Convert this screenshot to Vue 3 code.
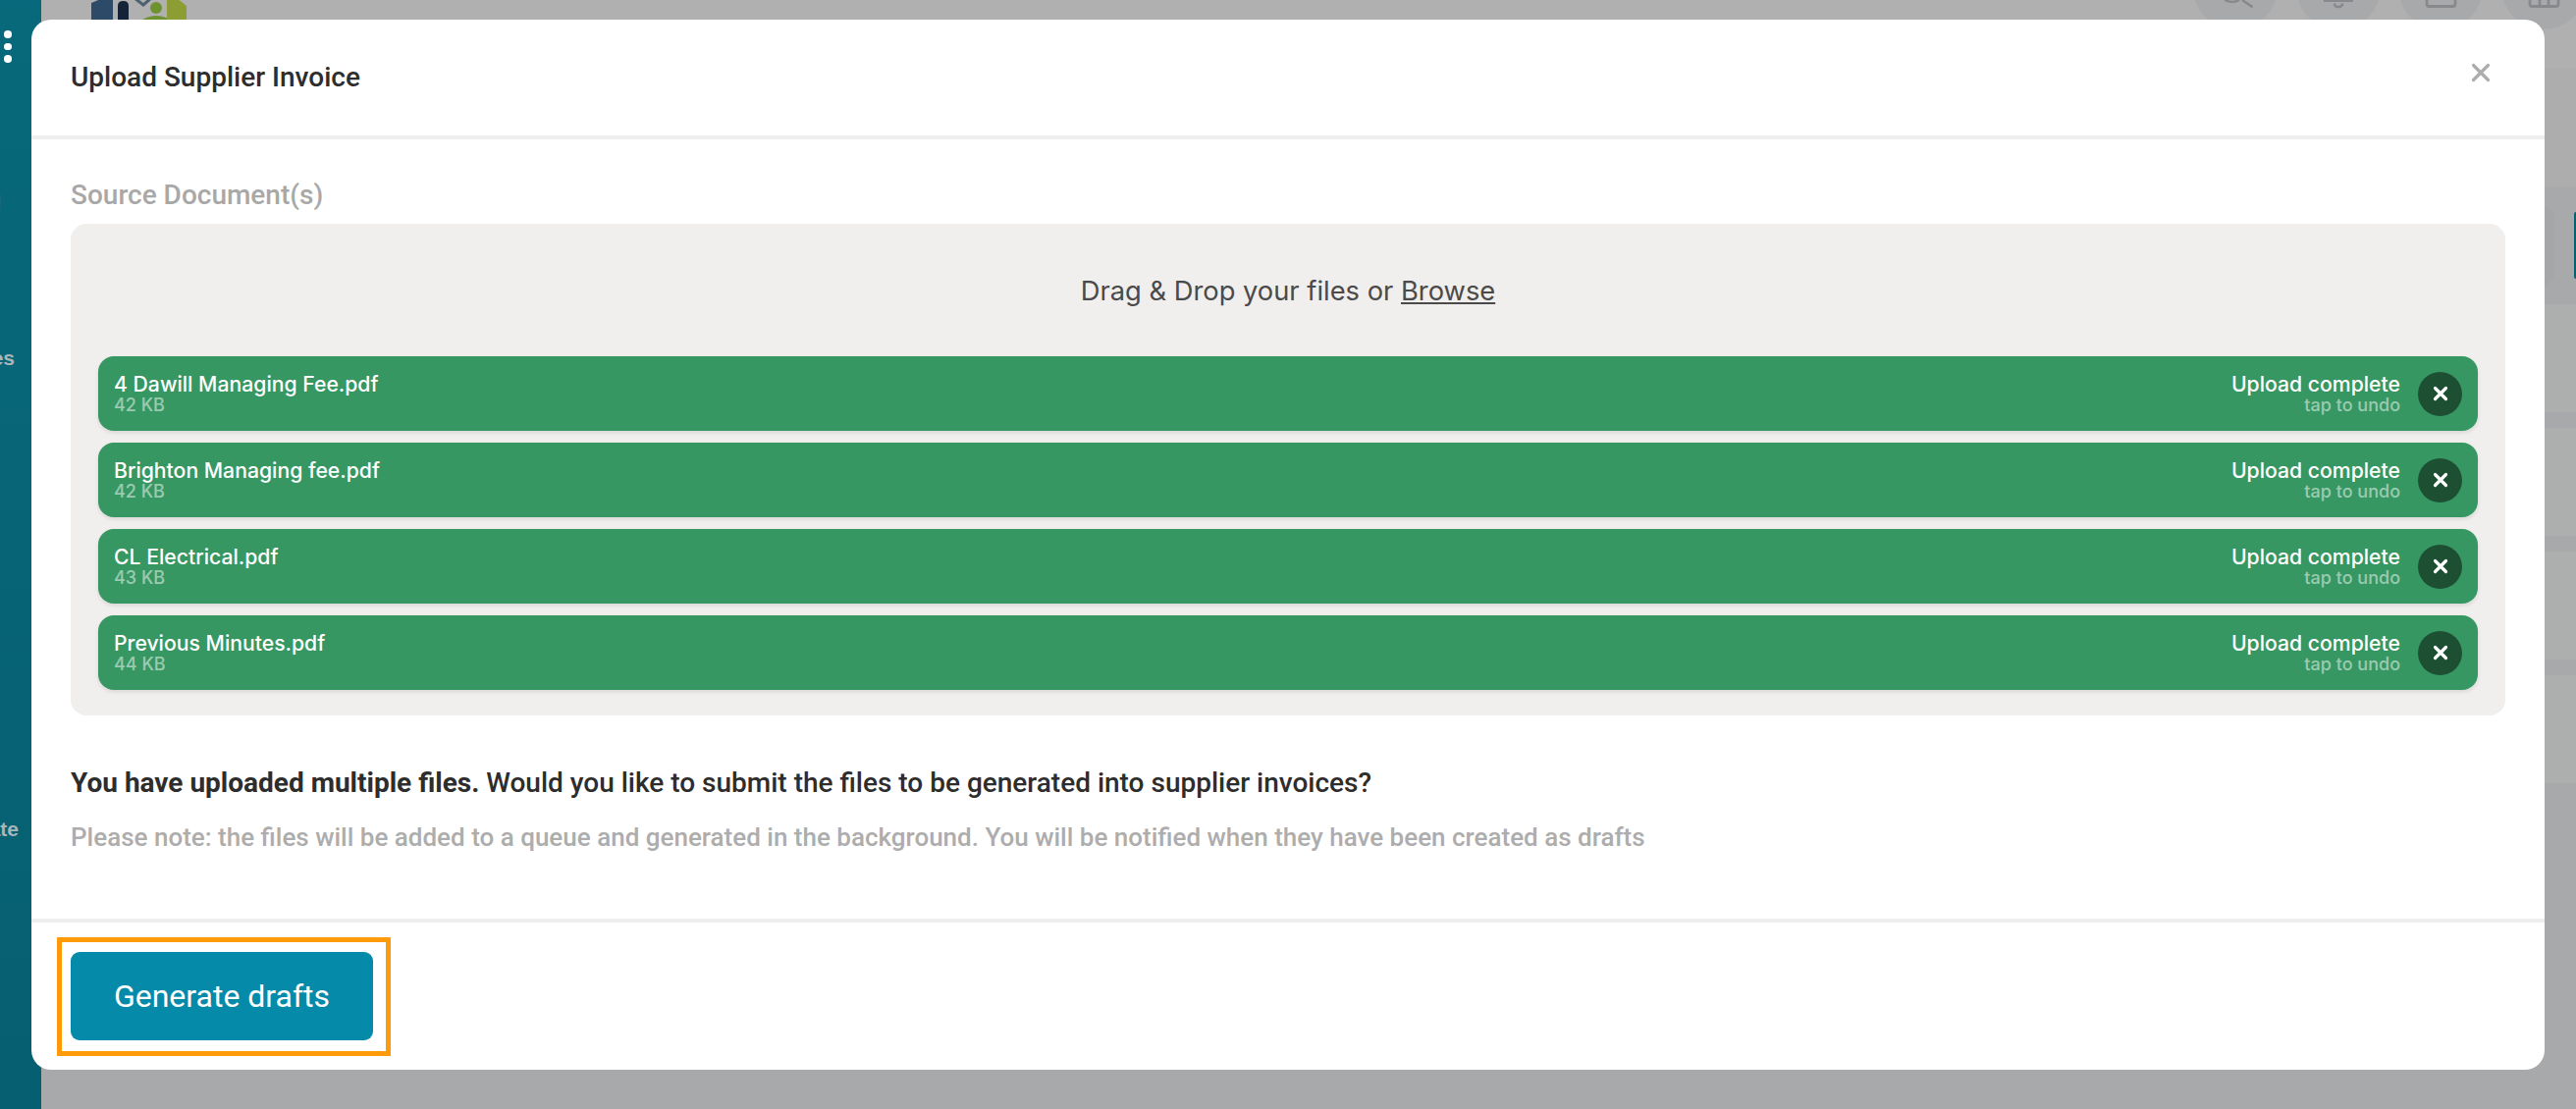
<script setup>
const files = [
  { name: '4 Dawill Managing Fee.pdf', size: '42 KB' },
  { name: 'Brighton Managing fee.pdf', size: '42 KB' },
  { name: 'CL Electrical.pdf', size: '43 KB' },
  { name: 'Previous Minutes.pdf', size: '44 KB' },
]
const rows = [1, 2, 3, 4]
</script>

<template>
  <div class="page">
    <aside class="sidebar">
      <div class="dots"><i></i><i></i><i></i></div>
      <span class="nav nav-a">Portal</span>
      <span class="nav nav-b">Invoices</span>
      <span class="nav nav-c">Delegate</span>
    </aside>

    <main class="main">
      <header class="topbar">
        <svg class="logo" width="100" height="22" viewBox="0 0 100 22">
          <path d="M0 22V5L12 0h10v22z" fill="#2d4a68" />
          <path d="M27 22V8q0-5 5.500-5T38 8v14z" fill="#142338" />
          <path d="M44 0l9 7 8-7" fill="none" stroke="#4c6172" stroke-width="3" />
          <circle cx="66" cy="10" r="6" fill="#6f9231" />
          <path d="M52 22q14-8 28 0z" fill="#6f9231" />
          <path d="M77 2l10-2 10 8v14H77z" fill="#8c9e33" />
        </svg>
        <div class="tools">
          <span class="tool"><svg width="36" height="30" viewBox="0 0 36 30"><path d="M7 0q8 4 15 0M25 0l10.700 7.300" fill="none" stroke="#88898c" stroke-width="2.500" /></svg></span>
          <span class="tool"><svg width="36" height="30" viewBox="0 0 36 30"><path d="M3 0.500h30" fill="none" stroke="#88898c" stroke-width="3" /><path d="M14 3.500q0 3.500 4 3.500t4-3.500" fill="none" stroke="#88898c" stroke-width="2.500" /></svg></span>
          <span class="tool"><svg width="36" height="30" viewBox="0 0 36 30"><path d="M4 0v4q0 2.500 2.500 2.500h24q2.500 0 2.500-2.500V0" fill="none" stroke="#88898c" stroke-width="2.800" /></svg></span>
          <span class="tool"><svg width="36" height="30" viewBox="0 0 36 30"><path d="M4 0v4q0 2.500 2.500 2.500h24q2.500 0 2.500-2.500V0M14 0v6.500M23 0v6.500" fill="none" stroke="#88898c" stroke-width="2.800" /></svg></span>
        </div>
      </header>
      <div class="table-head">
        <span class="ghost"></span>
        <span class="teal"></span>
      </div>
      <div class="rows">
        <div v-for="r in rows" :key="r" class="row"></div>
      </div>
    </main>

    <section class="modal">
      <header class="modal-head">
        <h1>Upload Supplier Invoice</h1>
        <svg class="close" width="20" height="20" viewBox="0 0 20 20">
          <path d="M2.500 2.500l15 15M17.500 2.500l-15 15" stroke="#adadad" stroke-width="3.200" stroke-linecap="round" />
        </svg>
      </header>

      <div class="modal-body">
        <label class="field-label">Source Document(s)</label>
        <div class="dropzone">
          <p class="drop-label">Drag &amp; Drop your files or <u>Browse</u></p>
          <ul class="file-list">
            <li v-for="f in files" :key="f.name" class="file">
              <div class="file-info">
                <span class="main-line">{{ f.name }}</span>
                <span class="sub-line">{{ f.size }}</span>
              </div>
              <div class="file-status">
                <span class="main-line">Upload complete</span>
                <span class="sub-line">tap to undo</span>
              </div>
              <span class="undo">
                <svg width="16" height="16" viewBox="0 0 16 16">
                  <path d="M2.500 2.500l11 11M13.500 2.500l-11 11" stroke="#fff" stroke-width="3.200" stroke-linecap="round" />
                </svg>
              </span>
            </li>
          </ul>
        </div>
        <p class="question"><strong>You have uploaded multiple files.</strong> Would you like to submit the files to be generated into supplier invoices?</p>
        <p class="note">Please note: the files will be added to a queue and generated in the background. You will be notified when they have been created as drafts</p>
      </div>

      <footer class="modal-foot">
        <div class="btn-wrap">
          <button class="primary" type="button">Generate drafts</button>
          <span class="highlight"></span>
        </div>
      </footer>
    </section>
  </div>
</template>

<style>
html, body { margin: 0; padding: 0; background: #a8a9ab; }
</style>

<style scoped>
.page {
  position: relative;
  width: 2624px;
  height: 1130px;
  display: flex;
  overflow: hidden;
  background: #a8a9ab;
  font-family: Roboto, sans-serif;
}
.sidebar {
  width: 42px;
  flex: none;
  display: flex;
  flex-direction: column;
  align-items: flex-end;
  overflow: hidden;
  background: linear-gradient(180deg, #07697b 0%, #065f70 100%);
  position: relative;
}
.dots {
  align-self: flex-start;
  margin: 31px 0 0 4px;
  display: flex;
  flex-direction: column;
  gap: 5px;
}
.dots i {
  display: block;
  width: 7.500px;
  height: 7.500px;
  border-radius: 50%;
  background: #fff;
}
.nav {
  align-self: flex-start;
  font: 700 21px/18px "Liberation Sans", sans-serif;
  color: #a9b5b8;
  white-space: nowrap;
  display: flex;
  justify-content: flex-end;
}
.nav-a { width: 1px; margin-top: 133px; }
.nav-b { width: 15px; margin-top: 141px; }
.nav-c { width: 19px; margin-top: 462px; }
.main { flex: 1; display: flex; flex-direction: column; min-width: 0; }
.topbar {
  height: 190px;
  flex: none;
  background: linear-gradient(180deg, #b0b0b0 0 70px, #adadad 70px 100%);
  display: flex;
  justify-content: space-between;
  align-items: flex-start;
  padding-left: 51px;
}
.logo { display: block; margin-top: -2px; }
.tools {
  display: flex;
  gap: 18.600px;
  margin-top: -56px;
  margin-right: -10px;
}
.tool {
  width: 86px;
  height: 86px;
  border-radius: 50%;
  background: #a8a9ab;
  display: flex;
  align-items: flex-end;
  justify-content: center;
  overflow: hidden;
}
.tool svg { display: block; }
.table-head {
  height: 120px;
  flex: none;
  background: #a8a9ab;
  display: flex;
  justify-content: flex-end;
  align-items: center;
  gap: 20px;
}
.ghost { width: 100px; height: 80px; border-radius: 12px; background: #a5a6a8; }
.teal { width: 2px; height: 68px; border-radius: 4px 0 0 4px; background: #075f70; }
.rows { display: flex; flex-direction: column; }
.row { height: 110px; background: #adafae; margin-bottom: 16px; }

.modal {
  position: absolute;
  left: 32px;
  top: 20px;
  width: 2560px;
  height: 1070px;
  display: flex;
  flex-direction: column;
  background: #fff;
  border-radius: 20px;
  overflow: hidden;
  color: #2d2d2d;
}
.modal-head {
  height: 118px;
  flex: none;
  display: flex;
  align-items: flex-start;
  justify-content: space-between;
  padding: 0 55px 0 40px;
  border-bottom: 4px solid #eeeeee;
}
.modal-head h1 {
  margin: 42px 0 0;
  font: 500 28px/34px Roboto, sans-serif;
  color: #2d2d2d;
}
.close { display: block; margin-top: 44px; }
.modal-body {
  flex: 1;
  min-height: 0;
  padding: 0 40px;
}
.field-label {
  display: block;
  margin-top: 40px;
  font: 500 28px/34px Roboto, sans-serif;
  color: #a8a8a8;
}
.dropzone {
  margin-top: 12px;
  background: #f0efed;
  border-radius: 16px;
  padding: 0 28px 26px;
}
.drop-label {
  margin: 0;
  height: 135px;
  box-sizing: border-box;
  padding-top: 52px;
  text-align: center;
  font: 400 27.300px/34px Inter, sans-serif;
  color: #4a4a4a;
}
.file-list {
  list-style: none;
  margin: 0;
  padding: 0;
  display: flex;
  flex-direction: column;
  gap: 12px;
}
.file {
  height: 76px;
  display: flex;
  align-items: center;
  padding: 0 16px;
  background: #369763;
  border-radius: 16px;
  box-shadow: 0 2px 4px rgba(0, 0, 0, 0.1);
  color: #fff;
}
.file-info, .file-status { display: flex; flex-direction: column; margin-top: -2px; }
.file-info { flex: 1; }
.file-status { align-items: flex-end; margin-right: 18px; }
.main-line { font: 500 21.200px/25px Inter, sans-serif; }
.sub-line { font: 500 18px/17px Inter, sans-serif; color: rgba(255, 255, 255, 0.5); }
.undo {
  width: 45px;
  height: 45px;
  border-radius: 50%;
  background: #1d4f33;
  display: flex;
  align-items: center;
  justify-content: center;
}
.undo svg { display: block; }
.question {
  margin: 52px 0 0;
  font: 500 28px/34px Roboto, sans-serif;
  color: #2d2d2d;
}
.question strong { font-weight: 700; }
.note {
  margin: 22px 0 0;
  font: 500 26px/32px Roboto, sans-serif;
  color: #adadad;
}
.modal-foot {
  height: 154px;
  flex: none;
  box-sizing: border-box;
  border-top: 4px solid #eeeeee;
  padding: 30px 40px 0;
}
.btn-wrap { position: relative; width: 308px; height: 90px; }
.primary {
  display: block;
  width: 308px;
  height: 90px;
  border: 0;
  padding: 0;
  border-radius: 9px;
  background: #068aa9;
  color: #fff;
  font: 400 32px/40px Roboto, sans-serif;
}
.highlight {
  position: absolute;
  left: -14px;
  top: -15px;
  width: 340px;
  height: 121px;
  box-sizing: border-box;
  border: 5px solid #ff9a0a;
}
</style>
